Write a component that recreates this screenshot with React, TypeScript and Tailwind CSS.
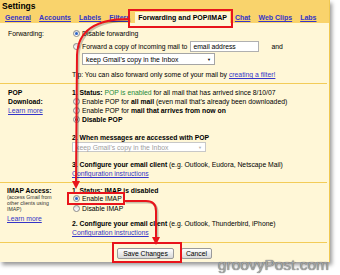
import React from 'react'

function Radio(props: { checked?: boolean; dark?: boolean }) {
  return (
    <span className="flex items-center justify-center w-[7px] h-[7px] ml-[1px] mr-[2px] rounded-full border border-[#8b8b8b] bg-gradient-to-b from-[#dcdcdc] to-white shrink-0">
      {props.checked && (
        <span className={'w-[3px] h-[3px] rounded-full ' + (props.dark ? 'bg-[#3a3a3a]' : 'bg-[#2d66c8]')} />
      )}
    </span>
  )
}

function Select(props: { text: string; disabled?: boolean; className?: string }) {
  return (
    <div
      className={
        'flex items-center justify-between bg-white border px-[3px] ' +
        (props.disabled ? 'border-[#c8c8c8] text-[#a0a0a0] ' : 'border-[#a5a5a5] text-black ') +
        (props.className || '')
      }
    >
      <span>{props.text}</span>
      <span className={'text-[4px] ' + (props.disabled ? 'text-[#b0b0b0]' : 'text-black')}>▼</span>
    </div>
  )
}

const link = 'text-[#3535c8] underline'

export default function App() {
  return (
    <div className="relative w-[340px] h-[275px] bg-white overflow-hidden font-['Liberation_Sans',Arial,sans-serif] text-[6.8px] leading-[9px] text-black">
      <div className="w-[330px] h-[262px] bg-[#fff7d7] border-r border-[#f0c850] shadow-[2px_3px_4px_rgba(0,0,0,0.4)] flex flex-col">
        {/* header */}
        <div className="h-[23px] bg-[#f9d36c] flex flex-col shrink-0">
          <div className="pl-[2px] pt-[1px] h-[12px] font-bold text-[8.5px] leading-[11px]">Settings</div>
          <div className="flex items-end gap-[8px] pl-[5px] h-[11px] text-[7px] font-bold leading-[9px]">
            <span className={link + ' pb-[1px]'}>General</span>
            <span className={link + ' pb-[1px]'}>Accounts</span>
            <span className={link + ' pb-[1px]'}>Labels</span>
            <span className={link + ' pb-[1px]'}>Filters</span>
            <span className="bg-[#fff7d7] h-[11px] px-[3px] pt-[1px] -mx-[3px]">Forwarding and POP/IMAP</span>
            <span className={link + ' pb-[1px]'}>Chat</span>
            <span className={link + ' pb-[1px]'}>Web Clips</span>
            <span className={link + ' pb-[1px]'}>Labs</span>
          </div>
        </div>

        {/* forwarding */}
        <div className="flex h-[60px] shrink-0">
          <div className="w-[72px] pl-[8px] pt-[6px] shrink-0">Forwarding:</div>
          <div className="pt-[6px]">
            <div className="flex items-center h-[9px]">
              <Radio checked />
              Disable forwarding
            </div>
            <div className="flex items-center h-[12px] mt-[2px]">
              <Radio />
              Forward a copy of incoming mail to
              <span className="ml-[3px] w-[69px] h-[11px] bg-white border border-[#b0b0b0] px-[2px] flex items-center">email address</span>
              <span className="ml-[12px]">and</span>
            </div>
            <Select text="keep Gmail's copy in the Inbox" className="ml-[10px] mt-[1px] w-[133px] h-[12px]" />
            <div className="mt-[5px]">
              Tip: You can also forward only some of your mail by <span className={link}>creating a filter!</span>
            </div>
          </div>
        </div>
        <div className="h-[1px] bg-[#f3cc58] mr-[2px] shrink-0" />

        {/* POP */}
        <div className="flex h-[98px] shrink-0">
          <div className="w-[72px] pl-[8px] pt-[4px] shrink-0">
            <div className="font-bold">POP</div>
            <div className="font-bold">Download:</div>
            <div className={link}>Learn more</div>
          </div>
          <div className="pt-[4px]">
            <div>
              <b>1. Status: </b>
              <span className="text-[#1e8a3a]">POP is enabled</span> for all mail that has arrived since 8/10/07
            </div>
            <div className="flex items-center h-[9px]">
              <Radio />
              Enable POP for&nbsp;<b>all mail</b>&nbsp;(even mail that's already been downloaded)
            </div>
            <div className="flex items-center h-[9px]">
              <Radio />
              Enable POP for&nbsp;<b>mail that arrives from now on</b>
            </div>
            <div className="flex items-center h-[9px]">
              <Radio checked dark />
              <b>Disable POP</b>
            </div>
            <div className="mt-[9px] font-bold">2. When messages are accessed with POP</div>
            <Select disabled text="keep Gmail's copy in the Inbox" className="w-[134px] h-[10px]" />
            <div className="mt-[8px]">
              <b>3. Configure your email client</b> (e.g. Outlook, Eudora, Netscape Mail)
            </div>
            <div className={link}>Configuration instructions</div>
          </div>
        </div>
        <div className="h-[1px] bg-[#f3cc58] mr-[2px] shrink-0" />

        {/* IMAP */}
        <div className="flex h-[59px] shrink-0">
          <div className="w-[72px] pl-[7px] pt-[3px] shrink-0">
            <div className="font-bold">IMAP Access:</div>
            <div className="text-[5.2px] leading-[6px] text-[#333] mt-[-1px]">
              <div>(access Gmail from</div>
              <div>other clients using</div>
              <div>IMAP)</div>
            </div>
            <div className={link + ' mt-[2px]'}>Learn more</div>
          </div>
          <div className="pt-[3px]">
            <div className="font-bold">1. Status: IMAP is disabled</div>
            <div className="flex items-center h-[9px] mt-[-1px]">
              <Radio checked />
              Enable IMAP
            </div>
            <div className="flex items-center h-[9px] mt-[1px]">
              <Radio />
              Disable IMAP
            </div>
            <div className="mt-[6px]">
              <b>2. Configure your email client</b> (e.g. Outlook, Thunderbird, iPhone)
            </div>
            <div className={link}>Configuration instructions</div>
          </div>
        </div>
        <div className="h-[1px] bg-[#f3cc58] mr-[2px] shrink-0" />

        {/* buttons */}
        <div className="flex justify-center gap-[7px] pt-[5px]">
          <span className="w-[57px] h-[11px] flex items-center justify-center rounded-[2px] border border-[#9a9a9a] bg-gradient-to-b from-white to-[#d8d8d8]">
            Save Changes
          </span>
          <span className="w-[31px] h-[11px] flex items-center justify-center rounded-[2px] border border-[#9a9a9a] bg-gradient-to-b from-white to-[#d8d8d8]">
            Cancel
          </span>
        </div>
      </div>

      {/* annotations */}
      <svg className="absolute inset-0 pointer-events-none" width="340" height="275" viewBox="0 0 340 275">
        <g fill="none" stroke="rgba(0,0,0,0.22)" strokeWidth="2" transform="translate(1.5,1.5)">
          <path d="M129 19 C 100 19, 78 28, 77 55 L 76 182" />
          <path d="M124 201 L 146 201 Q 156 201 156 211 L 156 238" />
        </g>
        <g fill="none" stroke="#e8141b" strokeWidth="2">
          <rect x="129" y="10" width="103" height="17" />
          <rect x="68" y="193" width="56" height="11" />
          <rect x="113" y="243" width="68" height="19" />
          <path d="M129 19 C 100 19, 78 28, 77 55 L 76 182" />
          <path d="M124 201 L 146 201 Q 156 201 156 211 L 156 238" />
        </g>
        <polygon points="72,181 80,181 76,189" fill="#e8141b" />
        <polygon points="152,237 160,237 156,245" fill="#e8141b" />
      </svg>

      <div className="absolute right-[11px] bottom-[2px] text-[15.5px] leading-[16px] text-[#a6a6a6] [text-shadow:0_0_1px_#444]">
        groovyPost.com
      </div>
    </div>
  )
}
